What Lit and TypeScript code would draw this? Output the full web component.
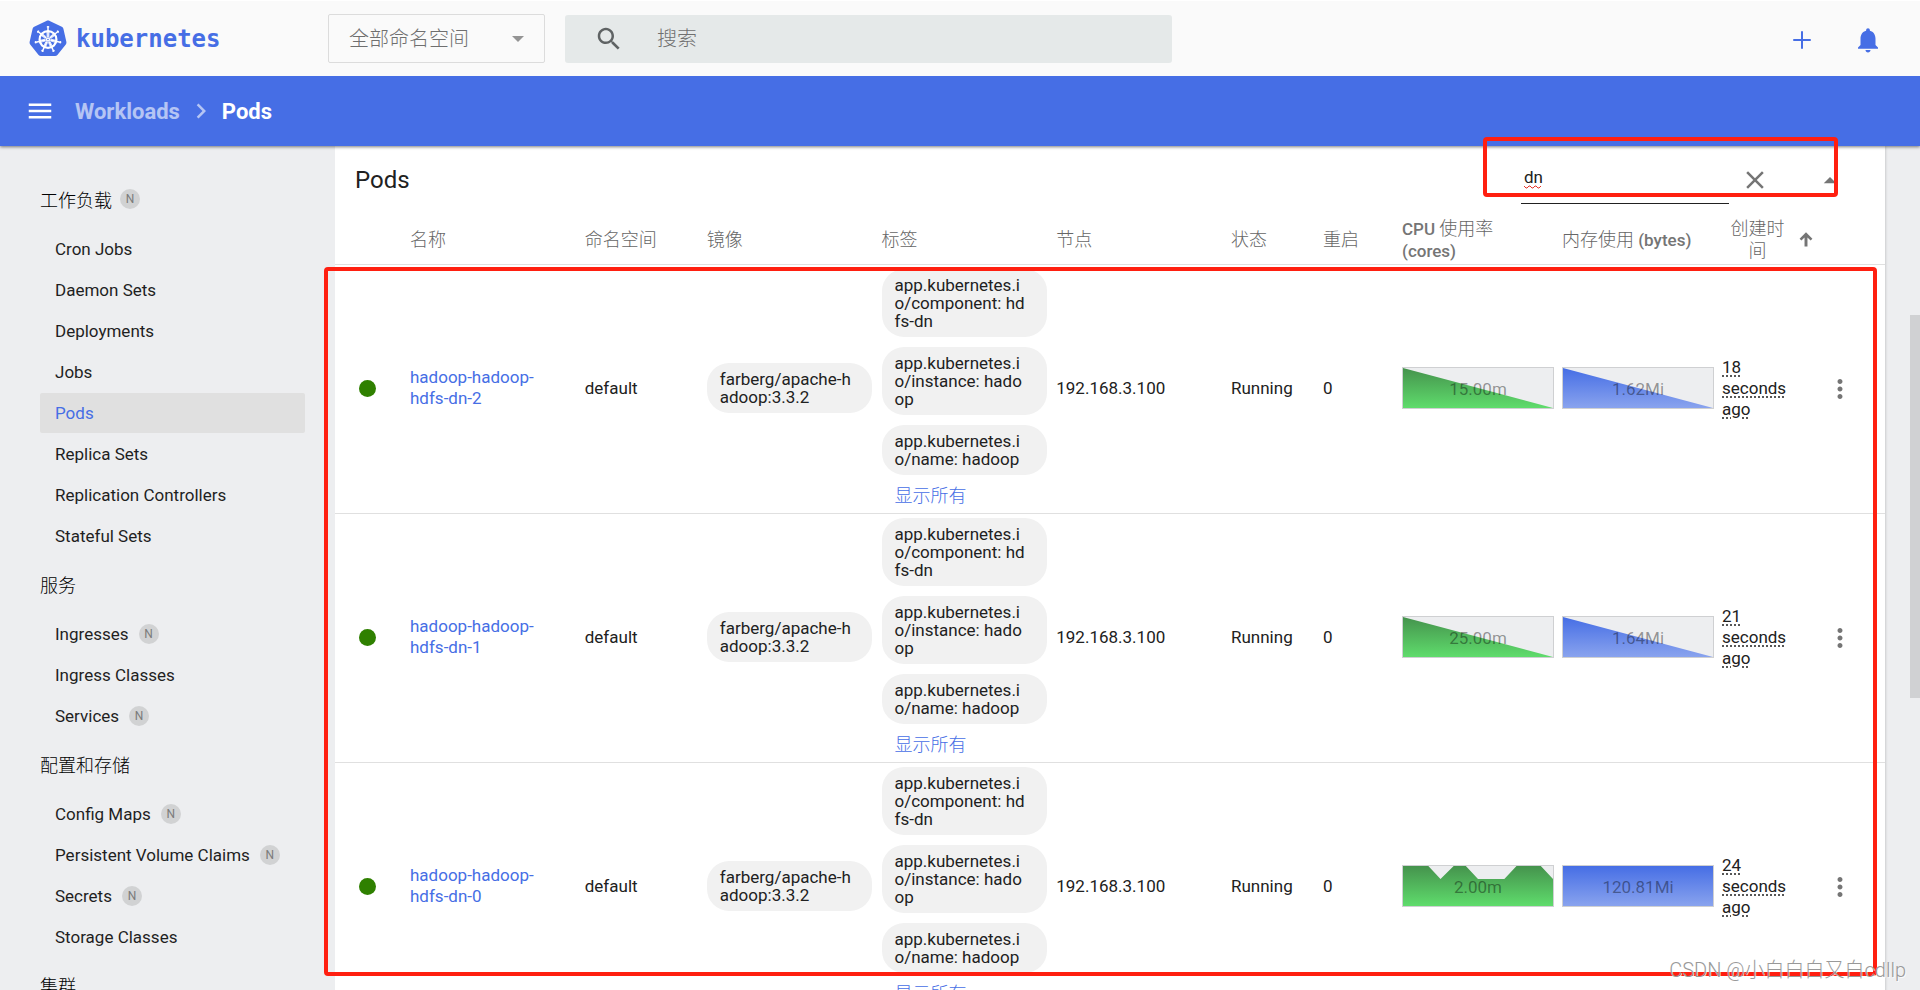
import { LitElement, html, css, svg } from "lit";
import { customElement, property } from "lit/decorators.js";

const shared = css`
  *,
  *::before,
  *::after {
    box-sizing: border-box;
  }
  button,
  input,
  select {
    font: inherit;
    color: inherit;
    background: none;
    border: 0;
    padding: 0;
    margin: 0;
    outline: none;
  }
  a {
    color: inherit;
    text-decoration: none;
  }
  svg {
    display: block;
    fill: currentColor;
  }
`;

const ICONS: Record<string, string> = {
  add: "M19 12.800h-6.200V19h-1.600v-6.200H5v-1.600h6.200V5h1.600v6.200H19z",
  bell: "M12 22c1.1 0 2-.9 2-2h-4c0 1.1.89 2 2 2zm6-6v-5c0-3.070-1.640-5.640-4.500-6.320V4c0-.83-.67-1.500-1.500-1.500s-1.500.67-1.500 1.500v.68C7.630 5.360 6 7.920 6 11v5l-2 2v1h16v-1l-2-2z",
  search:
    "M15.500 14h-.79l-.28-.27C15.410 12.590 16 11.110 16 9.500 16 5.910 13.090 3 9.500 3S3 5.910 3 9.500 5.910 16 9.500 16c1.610 0 3.090-.59 4.230-1.570l.27.28v.79l5 4.990L20.490 19l-4.990-5zm-6 0C7.010 14 5 11.990 5 9.500S7.010 5 9.500 5 14 7.010 14 9.500 11.990 14 9.500 14z",
  menu: "M3 18h18v-2H3v2zm0-5h18v-2H3v2zm0-7v2h18V6H3z",
  chevron: "M10 6L8.590 7.410 13.170 12l-4.580 4.590L10 18l6-6z",
  close:
    "M19 6.410L17.590 5 12 10.590 6.410 5 5 6.410 10.590 12 5 17.590 6.410 19 12 13.410 17.590 19 19 17.590 13.410 12z",
  up: "M7 14.500l5-5 5 5z",
  more: "M12 8c1.100 0 2-.9 2-2s-.9-2-2-2-2 .9-2 2 .9 2 2 2zm0 2c-1.100 0-2 .9-2 2s.9 2 2 2 2-.9 2-2-.9-2-2-2zm0 6c-1.100 0-2 .9-2 2s.9 2 2 2 2-.9 2-2-.9-2-2-2z",
  sort: "M10.400 19V9.200L7 12.600 5 10.600 12 3.600l7 7-2 2-3.400-3.400V19z",
};

const icon = (name: string, size = 30) =>
  html`<svg width=${size} height=${size} viewBox="0 0 24 24" aria-hidden="true">
    <path d=${ICONS[name]}></path>
  </svg>`;

const SPOKES = [0, 1, 2, 3, 4, 5, 6].map((n) => (n * 360) / 7);

const wheel = html`<svg class="wheel" width="38" height="38" viewBox="0 0 38 38" aria-hidden="true">
  <path
    d="M19 .6c.6 0 1.200.1 1.700.4l12.100 5.800c.8.4 1.400 1.100 1.600 2l3 13.200c.2.900 0 1.800-.6 2.500l-8.400 10.500c-.6.7-1.400 1.100-2.300 1.100H11.900c-.9 0-1.700-.4-2.300-1.100L1.200 24.500c-.6-.7-.8-1.600-.6-2.500l3-13.200c.2-.9.8-1.600 1.600-2L17.300 1c.5-.3 1.100-.4 1.700-.4z"
  ></path>
  <g fill="none" stroke="#fff" transform="translate(19 19.500)">
    <circle r="8.400" stroke-width="2.200"></circle>
    <circle r="1.500" stroke-width="1.400"></circle>
    ${SPOKES.map(
      (a) => svg`<g transform="rotate(${a})">
        <path d="M0-2.400V-13.600" stroke-width="1.500"></path>
        <path d="M-.9-2.600L-1.100-8 M.9-2.600L1.100-8" stroke-width=".7"></path>
        <path d="M-1.200-12.600H1.200" stroke-width="1.200"></path>
      </g>`,
    )}
  </g>
</svg>`;

@customElement("kd-header")
class KdHeader extends LitElement {
  static styles = [
    shared,
    css`
      :host {
        display: block;
      }
      .top {
        display: flex;
        align-items: center;
        height: 76px;
        padding: 0 37px 0 29px;
        background: #fafafa;
        border-top: 1px solid #fff;
        color: #466ee5;
      }
      .brand {
        display: flex;
        align-items: center;
        gap: 9px;
        width: 299px;
        font: 700 24px/32px "DejaVu Sans Mono", monospace;
      }
      .namespace {
        display: flex;
        align-items: center;
        position: relative;
        width: 217px;
        height: 49px;
        border: 1px solid #dcdcdc;
        border-radius: 2px;
        color: #6f6f6f;
      }
      .namespace select {
        appearance: none;
        width: 100%;
        height: 100%;
        padding: 0 20px;
        font-size: 20px;
        font-weight: 300;
      }
      .namespace::after {
        content: "";
        position: absolute;
        right: 20px;
        border: 6px solid transparent;
        border-top-color: #949494;
        border-bottom: 0;
        pointer-events: none;
      }
      .search {
        display: flex;
        align-items: center;
        flex: 0 1 607px;
        height: 48px;
        margin-left: 20px;
        padding-left: 29px;
        gap: 33px;
        background: #e5e9e9;
        border-radius: 3px;
        color: #5f6364;
      }
      .search input {
        flex: 1;
        height: 48px;
        font-size: 20px;
        font-weight: 300;
      }
      .search input::placeholder {
        color: #6f6f6f;
        opacity: 1;
      }
      .actions {
        display: flex;
        gap: 36px;
        margin-left: auto;
        padding-top: 2px;
      }
      .bar {
        display: flex;
        align-items: center;
        height: 70px;
        padding: 0 25px;
        background: #466ee5;
        color: #fff;
        font-size: 22px;
        font-weight: 700;
      }
      .crumbs {
        display: flex;
        align-items: center;
        margin-left: 20px;
      }
      .crumbs a,
      .crumbs svg {
        opacity: 0.6;
      }
      .crumbs svg {
        margin: 0 6px;
      }
    `,
  ];

  render() {
    return html`
      <div class="top">
        <a class="brand" href="#">${wheel}<span>kubernetes</span></a>
        <label class="namespace">
          <select aria-label="命名空间">
            <option>全部命名空间</option>
          </select>
        </label>
        <label class="search">
          ${icon("search")}
          <input type="text" placeholder="搜索" aria-label="搜索" />
        </label>
        <div class="actions">
          <button type="button" aria-label="新建">${icon("add")}</button>
          <button type="button" aria-label="通知">${icon("bell")}</button>
        </div>
      </div>
      <div class="bar">
        <button type="button" aria-label="菜单">${icon("menu")}</button>
        <nav class="crumbs">
          <a href="#">Workloads</a>${icon("chevron")}<span>Pods</span>
        </nav>
      </div>
    `;
  }
}

interface NavItem {
  label: string;
  badge?: boolean;
  active?: boolean;
}

interface NavGroup extends NavItem {
  items: NavItem[];
}

const NAV: NavGroup[] = [
  {
    label: "工作负载",
    badge: true,
    items: [
      { label: "Cron Jobs" },
      { label: "Daemon Sets" },
      { label: "Deployments" },
      { label: "Jobs" },
      { label: "Pods", active: true },
      { label: "Replica Sets" },
      { label: "Replication Controllers" },
      { label: "Stateful Sets" },
    ],
  },
  {
    label: "服务",
    items: [
      { label: "Ingresses", badge: true },
      { label: "Ingress Classes" },
      { label: "Services", badge: true },
    ],
  },
  {
    label: "配置和存储",
    items: [
      { label: "Config Maps", badge: true },
      { label: "Persistent Volume Claims", badge: true },
      { label: "Secrets", badge: true },
      { label: "Storage Classes" },
    ],
  },
  { label: "集群", items: [] },
];

@customElement("kd-sidenav")
class KdSidenav extends LitElement {
  static styles = [
    shared,
    css`
      :host {
        display: block;
        padding: 33px 30px 0 40px;
        overflow: hidden;
        color: #1f1f1f;
      }
      .group {
        display: flex;
        flex-direction: column;
        gap: 1px;
        margin-bottom: 8px;
      }
      .item,
      .title {
        display: flex;
        align-items: center;
        height: 40px;
        padding-left: 15px;
        gap: 10px;
        border-radius: 2px;
        font-size: 17px;
        white-space: nowrap;
      }
      .title {
        padding-left: 0;
        margin-bottom: 9px;
        gap: 8px;
        color: #000;
        font-size: 18px;
        font-weight: 300;
      }
      .active {
        background: #e0e0e0;
        color: #466ee5;
      }
      .badge {
        width: 20px;
        height: 20px;
        border-radius: 50%;
        background: #d1d2d3;
        color: #7b7b7b;
        font-size: 12px;
        font-weight: 400;
        line-height: 20px;
        text-align: center;
      }
    `,
  ];

  private entry(item: NavItem, cls: string) {
    return html`<a class="${cls} ${item.active ? "active" : ""}" href="#"
      ><span>${item.label}</span>${item.badge ? html`<span class="badge">N</span>` : ""}</a
    >`;
  }

  render() {
    return NAV.map(
      (group) => html`<nav class="group">
        ${this.entry(group, "title")}${group.items.map((item) => this.entry(item, "item"))}
      </nav>`,
    );
  }
}

const FLAT = "0,40 0,0 148,0 148,40";
const FALLING = "0,40 0,0 148,40";
const WAVY =
  "0,40 0,0 25,0 37,13 50,0 62,0 74,13 100,13 112,0 136,0 148,13 148,40";

@customElement("kd-sparkline")
class KdSparkline extends LitElement {
  @property() shape = FLAT;
  @property() kind = "cpu";
  @property() value = "";

  static styles = [
    shared,
    css`
      :host {
        display: grid;
        height: 42px;
        border: 1px solid #cfd0d2;
        background: #edeef0;
      }
      svg,
      span {
        grid-area: 1 / 1;
        width: 100%;
        height: 40px;
      }
      span {
        color: rgba(0, 0, 0, 0.4);
        line-height: 42px;
        text-align: center;
        z-index: 1;
      }
    `,
  ];

  render() {
    const [from, to] = this.kind === "cpu" ? ["#45934d", "#5fdc6c"] : ["#466ee5", "#89a3ee"];
    return html`<svg viewBox="0 0 148 40" preserveAspectRatio="none" aria-hidden="true">
        <defs>
          <linearGradient id="fill" x1="0" y1="0" x2="0" y2="1">
            <stop offset="0" stop-color=${from}></stop>
            <stop offset="1" stop-color=${to}></stop>
          </linearGradient>
        </defs>
        <polygon points=${this.shape} fill="url(#fill)"></polygon></svg
      ><span>${this.value}</span>`;
  }
}

interface Pod {
  name: string;
  cpu: string;
  cpuShape: string;
  memory: string;
  memoryShape: string;
  age: string;
}

const PODS: Pod[] = [
  { name: "hadoop-hadoop-hdfs-dn-2", cpu: "15.00m", cpuShape: FALLING, memory: "1.62Mi", memoryShape: FALLING, age: "18 seconds ago" },
  { name: "hadoop-hadoop-hdfs-dn-1", cpu: "25.00m", cpuShape: FALLING, memory: "1.64Mi", memoryShape: FALLING, age: "21 seconds ago" },
  { name: "hadoop-hadoop-hdfs-dn-0", cpu: "2.00m", cpuShape: WAVY, memory: "120.81Mi", memoryShape: FLAT, age: "24 seconds ago" },
];

const LABELS = [
  "app.kubernetes.io/component: hdfs-dn",
  "app.kubernetes.io/instance: hadoop",
  "app.kubernetes.io/name: hadoop",
];

@customElement("kd-pod-list")
class KdPodList extends LitElement {
  static styles = [
    shared,
    css`
      :host {
        display: block;
        background: #fff;
        box-shadow: 0 0 3px rgba(0, 0, 0, 0.25);
        color: #212121;
        font-size: 17px;
        line-height: 21px;
      }
      .head {
        display: flex;
        align-items: center;
        height: 57px;
        padding: 11px 40px 0 20px;
        color: #757575;
      }
      h1 {
        margin: 0 auto 0 0;
        color: #212121;
        font-size: 24px;
        font-weight: 400;
      }
      .filter {
        position: relative;
        width: 208px;
        height: 47px;
        margin-right: 11px;
        border-bottom: 1px solid #212121;
        color: #212121;
      }
      .filter input {
        width: 100%;
        height: 41px;
        padding: 0 3px;
      }
      .squiggle {
        position: absolute;
        left: 3px;
        top: 28px;
        fill: none;
        stroke: #e5352b;
      }
      .collapse {
        margin-left: 45px;
      }
      table {
        width: 100%;
        table-layout: fixed;
        border-collapse: collapse;
      }
      .c-dot { width: 75px; }
      .c-ns { width: 122px; }
      .c-status { width: 92px; }
      .c-restart { width: 79px; }
      .c-cpu { width: 160px; }
      .c-mem { width: 160px; }
      .c-age { width: 103px; }
      .c-menu { width: 60px; }
      th,
      td {
        padding: 0 8px 0 0;
        border-bottom: 1px solid #e0e0e0;
        text-align: left;
        font-weight: 400;
      }
      th {
        height: 61px;
        padding-top: 14px;
        color: #757575;
        font-weight: 500;
        line-height: 22px;
      }
      .zh {
        color: #666;
        font-size: 18px;
        font-weight: 300;
      }
      .mem {
        white-space: nowrap;
      }
      .raised {
        padding-bottom: 2px;
      }
      .name {
        padding-right: 32px;
      }
      .age {
        display: flex;
        align-items: center;
        gap: 6px;
        padding-left: 4px;
        text-align: center;
      }
      .age svg {
        flex: none;
      }
      .dot {
        width: 17px;
        height: 17px;
        margin-left: 24px;
        border-radius: 50%;
        background: #2f8000;
      }
      .link {
        color: #466ee5;
      }
      .chips {
        display: flex;
        flex-direction: column;
        gap: 10px;
        padding: 4px 0 6px;
      }
      .chip {
        width: 165px;
        padding: 7px 18px 7px 13px;
        border-radius: 22px;
        background: #f1f1f1;
        line-height: 18px;
        word-break: break-all;
      }
      .all {
        height: 22px;
        padding-left: 13px;
        text-align: left;
        color: #466ee5;
        font-size: 18px;
        font-weight: 300;
      }
      kd-sparkline {
        width: 152px;
      }
      .time {
        width: 70px;
        text-decoration: underline dotted #212121;
        text-underline-offset: 3px;
      }
      .more {
        display: block;
        color: #757575;
      }
    `,
  ];

  render() {
    return html`
      <div class="head">
        <h1>Pods</h1>
        <label class="filter">
          <input type="text" .value=${"dn"} aria-label="过滤" />
          <svg class="squiggle" width="18" height="4" viewBox="0 0 18 4" aria-hidden="true">
            <path d="M0 1l2 2h1l2-2h1l2 2h1l2-2h1l2 2h1l2-2"></path>
          </svg>
        </label>
        <button type="button" aria-label="清除">${icon("close")}</button>
        <button class="collapse" type="button" aria-label="收起">${icon("up")}</button>
      </div>
      <table>
        <colgroup>
          <col class="c-dot" />
          <col />
          <col class="c-ns" />
          <col />
          <col />
          <col />
          <col class="c-status" />
          <col class="c-restart" />
          <col class="c-cpu" />
          <col class="c-mem" />
          <col class="c-age" />
          <col class="c-menu" />
        </colgroup>
        <thead>
          <tr>
            <th></th>
            ${["名称", "命名空间", "镜像", "标签", "节点", "状态", "重启"].map(
              (title) => html`<th><span class="zh">${title}</span></th>`,
            )}
            <th>CPU <span class="zh">使用率</span><br />(cores)</th>
            <th class="mem"><span class="zh">内存使用</span> (bytes)</th>
            <th><div class="age"><span class="zh">创建时间</span>${icon("sort", 22)}</div></th>
            <th></th>
          </tr>
        </thead>
        <tbody>
          ${PODS.map(
            (pod) => html`<tr>
              <td><div class="dot"></div></td>
              <td class="name raised"><a class="link" href="#">${pod.name}</a></td>
              <td>default</td>
              <td class="raised"><div class="chip">farberg/apache-hadoop:3.3.2</div></td>
              <td>
                <div class="chips">
                  ${LABELS.map((label) => html`<div class="chip">${label}</div>`)}
                  <button class="all" type="button">显示所有</button>
                </div>
              </td>
              <td>192.168.3.100</td>
              <td>Running</td>
              <td>0</td>
              <td class="raised">
                <kd-sparkline kind="cpu" .shape=${pod.cpuShape} .value=${pod.cpu}></kd-sparkline>
              </td>
              <td class="raised">
                <kd-sparkline kind="memory" .shape=${pod.memoryShape} .value=${pod.memory}></kd-sparkline>
              </td>
              <td><div class="time">${pod.age}</div></td>
              <td><button class="more" type="button" aria-label="操作">${icon("more")}</button></td>
            </tr>`,
          )}
        </tbody>
      </table>
    `;
  }
}

@customElement("app-root")
class AppRoot extends LitElement {
  static styles = [
    shared,
    css`
      :host {
        display: flex;
        flex-direction: column;
        position: relative;
        height: 100vh;
        overflow: hidden;
        background: #edeef0;
        font-family: Roboto, "Noto Sans CJK SC", sans-serif;
        font-size: 17px;
      }
      kd-header {
        position: relative;
        z-index: 1;
        box-shadow: 0 1px 3px rgba(0, 0, 0, 0.5);
      }
      .body {
        display: flex;
        flex: 1;
        min-height: 0;
      }
      kd-sidenav {
        flex: 0 0 335px;
      }
      main {
        flex: 1;
        min-width: 0;
        padding-right: 25px;
        overflow: hidden;
      }
      kd-pod-list {
        min-height: 100%;
      }
      .track {
        width: 10px;
        padding-top: 169px;
      }
      .thumb {
        height: 383px;
        background: #d0d1d3;
      }
      .mark {
        position: absolute;
        z-index: 2;
        border: 4px solid #ff1f10;
        border-radius: 4px;
        pointer-events: none;
      }
      .mark-filter {
        top: 137px;
        right: 82px;
        width: 355px;
        height: 60px;
      }
      .mark-rows {
        inset: 267px 43px 14px 324px;
      }
      .watermark {
        position: absolute;
        z-index: 3;
        right: 14px;
        bottom: 6px;
        color: #999;
        font-size: 20px;
        font-weight: 300;
        line-height: 28px;
        text-shadow: 1px 1px 0 rgba(255, 255, 255, 0.8);
      }
    `,
  ];

  render() {
    return html`
      <kd-header></kd-header>
      <div class="body">
        <kd-sidenav></kd-sidenav>
        <main><kd-pod-list></kd-pod-list></main>
        <div class="track"><div class="thumb"></div></div>
      </div>
      <div class="mark mark-filter"></div>
      <div class="mark mark-rows"></div>
      <div class="watermark">CSDN @小白白白又白cdllp</div>
    `;
  }
}
